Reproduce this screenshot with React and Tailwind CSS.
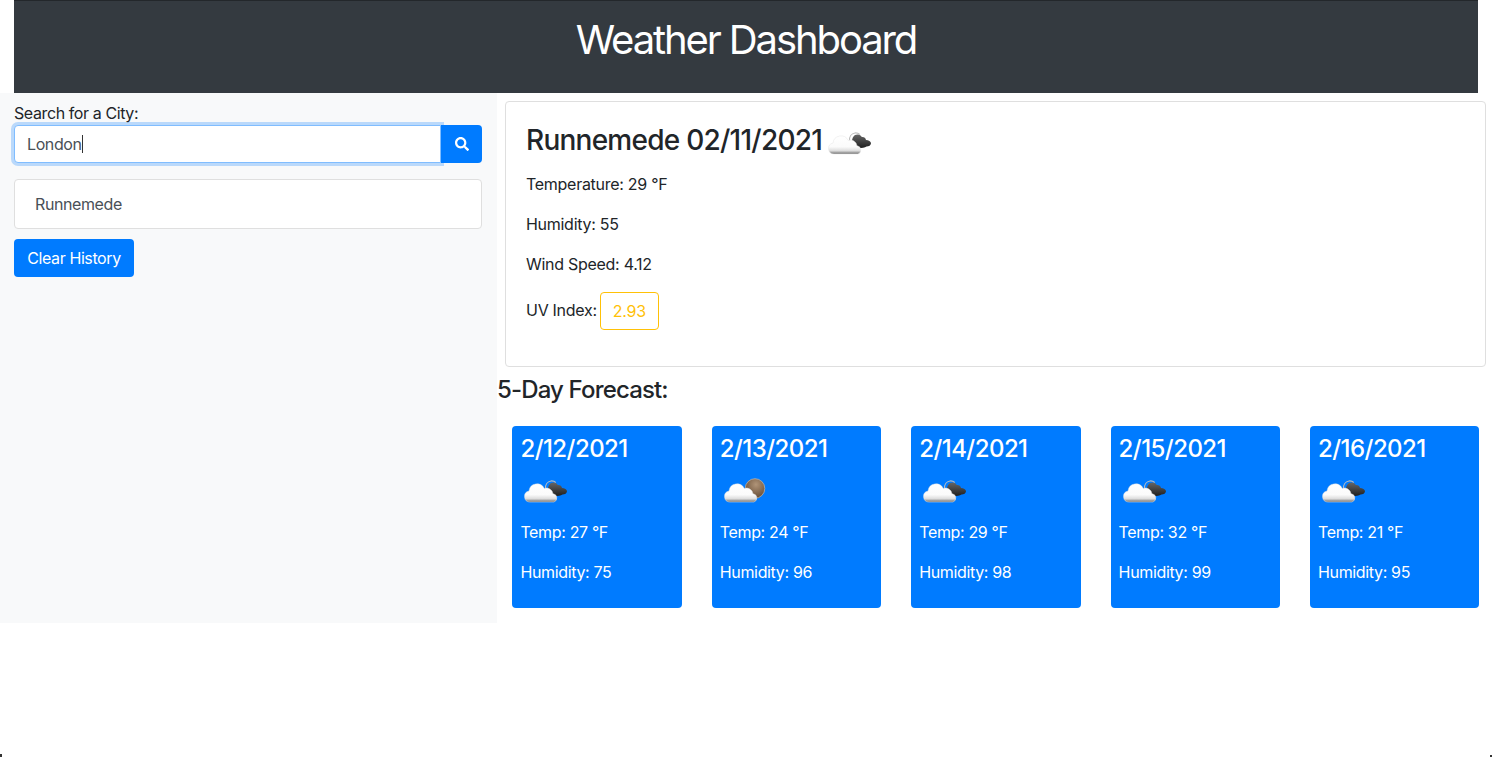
import { FaSearch } from 'react-icons/fa'

const days = [
  { date: '2/12/2021', temp: 27, humidity: 75, icon: 'dark' },
  { date: '2/13/2021', temp: 24, humidity: 96, icon: 'brown' },
  { date: '2/14/2021', temp: 29, humidity: 98, icon: 'dark' },
  { date: '2/15/2021', temp: 32, humidity: 99, icon: 'dark' },
  { date: '2/16/2021', temp: 21, humidity: 95, icon: 'dark' },
]

function WeatherIcon({ kind = 'dark', id }) {
  return (
    <svg width="50" height="50" viewBox="0 0 50 50" className="block">
      <defs>
        <linearGradient id={`cloud-${id}`} x1="0" y1="0" x2="0" y2="1">
          <stop offset="0" stopColor="#ffffff" />
          <stop offset="0.6" stopColor="#fbfbfb" />
          <stop offset="0.82" stopColor="#dddddd" />
          <stop offset="1" stopColor="#6f6f6f" />
        </linearGradient>
        <linearGradient id={`dark-${id}`} x1="0" y1="0" x2="0" y2="1">
          <stop offset="0" stopColor="#666666" />
          <stop offset="1" stopColor="#1f1f1f" />
        </linearGradient>
        <radialGradient id={`sun-${id}`} cx="0.55" cy="0.3" r="0.75">
          <stop offset="0" stopColor="#b09478" />
          <stop offset="1" stopColor="#5f4630" />
        </radialGradient>
      </defs>
      {kind === 'dark' ? (
        <g>
          <path d="M25.500 26c-.4-4.500 2-7.500 5.500-8 2-.2 3.500.4 4.700 1.500" fill="none" stroke="#bdbdbd" strokeWidth="1.200" />
          <path
            d="M28 27c0-4 1.800-7.500 5.500-7.500 2 0 3.500 1 4.300 2.500 2.300-.3 3.800 1 4.200 3 2.500.2 5 1.300 5 3.200 0 2-2.200 3.300-4.500 3.300-1.500 1-5 1.500-7.500 1.500-3.500 0-7-2-7-6z"
            fill={`url(#dark-${id})`}
          />
        </g>
      ) : (
        <circle cx="35" cy="25.500" r="9.800" fill={`url(#sun-${id})`} stroke="#cbb9a5" strokeWidth="0.700" />
      )}
      <path
        d="M10 39a5.500 5.500 0 0 1-1-10.900a8 8 0 0 1 15.200-2.600a6.500 6.500 0 0 1 8.800 5.200a4.300 4.300 0 0 1 1 8.300z"
        fill={`url(#cloud-${id})`}
        stroke="#e4e4e4"
        strokeWidth="0.500"
      />
    </svg>
  )
}

function ForecastCard({ day, id }) {
  return (
    <div className="flex-1 h-[182px] rounded-[4px] bg-[#007bff] text-white pt-[8px] px-[8px] tracking-[-0.35px]">
      <h4 className="text-[24px] leading-[29px] font-medium tracking-[-0.55px]">{day.date}</h4>
      <div className="h-[50px]">
        <WeatherIcon kind={day.icon} id={id} />
      </div>
      <p className="mt-[7px] h-[40px] leading-[24px]">Temp: {day.temp} °F</p>
      <p className="h-[40px] leading-[24px]">Humidity: {day.humidity}</p>
    </div>
  )
}

export default function App() {
  return (
    <div className="relative h-[757px] overflow-hidden bg-white text-[16px] text-[#212529] tracking-[-0.4px] font-['Inter','Liberation_Sans',sans-serif]">
      <header className="mx-[14px] h-[93px] border-t border-[#23272b] bg-[#343a40] text-center text-white">
        <h1 className="pt-[15px] text-[40px] leading-[48px] font-normal tracking-[-2.1px]">Weather Dashboard</h1>
      </header>

      <div className="flex">
        <aside className="w-[497px] h-[530px] bg-[#f8f9fa] pl-[14px] pr-[15px] pt-[12px] pb-4">
          <label className="block h-[20px] leading-[17px]">Search for a City:</label>
          <div className="flex h-[38px]">
            <div className="flex flex-1 items-center rounded-l-[4px] border border-[#80bdff] bg-white px-[12px] text-[#495057] shadow-[0_0_0_3px_rgba(0,123,255,0.25)] z-0">
              London<span className="h-[18px] w-px bg-[#333]"></span>
            </div>
            <button className="flex w-[41px] items-center justify-center rounded-r-[4px] bg-[#007bff] text-white z-10">
              <FaSearch size={14} />
            </button>
          </div>
          <div className="mt-[16px] flex h-[50px] items-center rounded-[4px] border border-[#dfdfdf] bg-white px-[20px] text-[#495057]">
            Runnemede
          </div>
          <button className="mt-[10px] block h-[38px] w-[120px] rounded-[4px] bg-[#007bff] text-white">
            Clear History
          </button>
        </aside>

        <main className="flex-1 pt-[8px]">
          <section className="ml-[8px] mr-[6px] h-[266px] rounded-[4px] border border-[#dfdfdf] px-[20px] pt-[20px] tracking-[-0.28px]">
            <div className="flex h-[36px] items-center">
              <h3 className="text-[28px] leading-[36px] font-medium tracking-[-0.75px]">Runnemede 02/11/2021</h3>
              <div className="ml-[2px] h-[50px]">
                <WeatherIcon kind="dark" id="today" />
              </div>
            </div>
            <p className="mt-[14px] h-[40px] leading-[24px]">Temperature: 29 °F</p>
            <p className="h-[40px] leading-[24px]">Humidity: 55</p>
            <p className="h-[40px] leading-[24px]">Wind Speed: 4.12</p>
            <div className="flex items-center">
              <span className="mb-[2px]">UV Index:</span>
              <span className="ml-[3px] flex h-[38px] w-[59px] items-center justify-center rounded-[4px] border border-[#ffc107] text-[#ffc107]">
                2.93
              </span>
            </div>
          </section>
          <h4 className="mt-[8px] text-[24px] leading-[29px] font-medium tracking-[-0.85px]">5-Day Forecast:</h4>
          <div className="mt-[22px] ml-[15.4px] mr-[12.6px] flex gap-[30px]">
            {days.map((d, i) => (
              <ForecastCard key={d.date} day={d} id={i} />
            ))}
          </div>
        </main>
      </div>

      <span className="absolute bottom-0 left-0 h-[3px] w-[2px] bg-[#333]"></span>
      <span className="absolute bottom-0 right-0 h-[2px] w-[2px] bg-[#333]"></span>
    </div>
  )
}
